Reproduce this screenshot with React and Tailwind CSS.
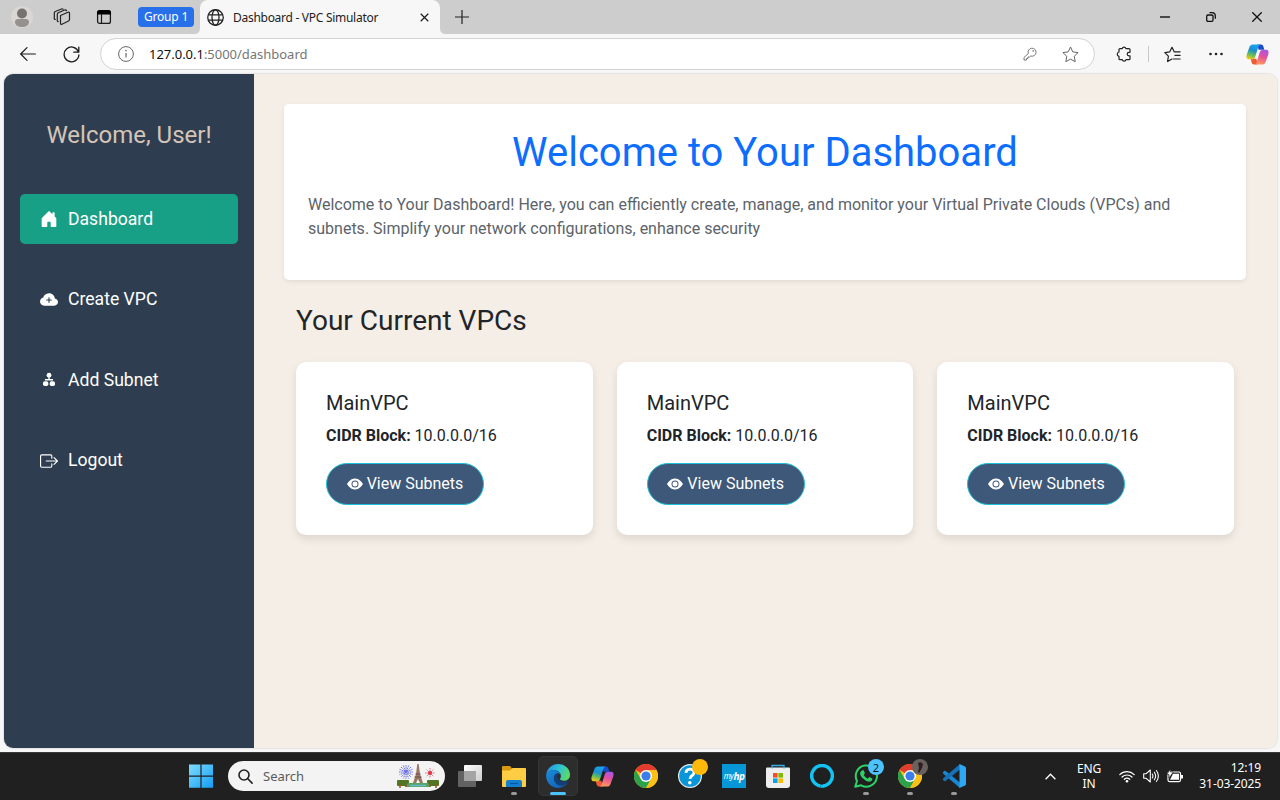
import React from "react";
import { BsHouseDoorFill, BsCloudPlusFill, BsBoxArrowRight, BsEyeFill } from "react-icons/bs";

const ui = "font-['Noto_Sans','Open_Sans',sans-serif]";

function Copilot({ id, className }) {
  return (
    <svg className={className} viewBox="0 0 24 24">
      <defs>
        <linearGradient id={id + "a"} x1="0.6" y1="0" x2="0.3" y2="1">
          <stop offset="0" stopColor="#1aa6ee" />
          <stop offset="0.4" stopColor="#1c8fd4" />
          <stop offset="0.7" stopColor="#63bc5a" />
          <stop offset="1" stopColor="#f3cb1c" />
        </linearGradient>
        <linearGradient id={id + "b"} x1="0.7" y1="0" x2="0.4" y2="1">
          <stop offset="0" stopColor="#a557e8" />
          <stop offset="0.45" stopColor="#e4509c" />
          <stop offset="1" stopColor="#ff9a5c" />
        </linearGradient>
      </defs>
      <path d="M12 1.500h3.700c1.300 0 2 .9 2.400 2.100l1 3.400h-6z" fill="#1b4bc8" />
      <path d="M12 22.500H8.300c-1.300 0-2-.9-2.400-2.100l-1-3.900h6z" fill="#ef5a38" />
      <path d="M7.200 1.500h8c-1.400.3-2 1.400-2.500 3L9.700 14c-.6 2-1.500 3-3.300 3H3.300C.6 17 0 14.800.7 12.300L3.500 4.500c.7-2 1.900-3 3.700-3z" fill={`url(#${id}a)`} />
      <path d="M16.800 22.500h-8c1.400-.3 2-1.400 2.500-3l3-9.500c.6-2 1.500-3 3.300-3h3.100c2.700 0 3.300 2.200 2.600 4.700l-2.800 7.800c-.7 2-1.900 3-3.700 3z" fill={`url(#${id}b)`} />
    </svg>
  );
}

function Chrome() {
  return (
    <svg className="size-6" viewBox="0 0 24 24">
      <circle cx="12" cy="12" r="12" fill="#fbc116" />
      <path d="M12 12 1.600 6A12 12 0 0 1 22.400 6H12z" fill="#e33b2e" />
      <path d="M1.600 6A12 12 0 0 0 12 24l5.200-9L12 12 6.800 15z" fill="#2da24c" />
      <path d="M22.400 6A12 12 0 0 1 12 24l5.200-9A6 6 0 0 0 17 8.600L12 6z" fill="#fbc116" />
      <circle cx="12" cy="12" r="6" fill="#fff" />
      <circle cx="12" cy="12" r="4.600" fill="#3b7ded" />
    </svg>
  );
}

function Edge() {
  return (
    <svg className="size-6" viewBox="0 0 24 24">
      <defs>
        <linearGradient id="edgeTop" x1="0" y1="0.3" x2="1" y2="0.6">
          <stop offset="0" stopColor="#2594e2" />
          <stop offset="0.5" stopColor="#2fc2d4" />
          <stop offset="1" stopColor="#5fdc5c" />
        </linearGradient>
        <linearGradient id="edgeLow" x1="0" y1="0" x2="1" y2="1">
          <stop offset="0" stopColor="#1b8ddb" />
          <stop offset="1" stopColor="#1057b0" />
        </linearGradient>
      </defs>
      <path d="M.2 10.500C1.200 4.500 6 0 12 0c7 0 12 5 12 10.700 0 4-3 6-6.200 6-2.600 0-4-.8-4-1.600 0-.5 1.100-1 1.100-2.900C14.900 8.500 11.600 6 8 6c-3.800 0-6.600 2-7.800 4.500z" fill="url(#edgeTop)" />
      <path d="M.2 10.500C1.500 7.500 4.700 6 8 6c3 0 5.700 1.700 6.600 4-3-1.600-6.600 0-6.600 4.300 0 4.600 4 8 9 7 2-.5 3.500-1.500 4.800-2.500C19.700 22 16 24 12 24 5.400 24-.5 18.500.2 10.500z" fill="url(#edgeLow)" />
      <path d="M8 14.300C8 11 10 9 12.500 9.400c-1.700 1.600-2 4.600.3 6.600 2.600 2.200 6.200 2 9.400.2.600-.3.800.2.500.8-1.300 2.600-4 4.500-7 4.500C11.300 21.500 8 18.300 8 14.300z" fill="#123f78" />
    </svg>
  );
}

function TabStrip() {
  return (
    <header className="flex h-[34px] items-stretch bg-[#cdcdcd]">
      <div className="flex w-[194px] items-center">
        <svg className="ml-[11px] size-[22px]" viewBox="0 0 22 22">
          <circle cx="11" cy="11" r="11" fill="#d9d6d3" />
          <circle cx="11" cy="7.500" r="5" fill="#77726f" />
          <path d="M4 16c0-2 1.500-3 3-3h8c1.500 0 3 1 3 3 0 3-3 5-7 5s-7-2-7-5z" fill="#96918d" />
        </svg>
        <svg className="ml-5 size-[18px]" viewBox="0 0 18 18" fill="none" stroke="#222" strokeWidth="1.200" strokeLinejoin="round" strokeLinecap="round">
          <path d="M7.500 7.500 15 4.300q1.500-.5 1.500 1v6.200q0 1-1 1.500L9 16.200q-1.500.5-1.500-1z" />
          <path d="M5.300 13.500q-1 .2-1-1V6.300q0-1 1-1.500L11.500 2q1.500-.5 2 .8" />
          <path d="M2.300 11.500q-1 0-1-1V5q0-1 1-1.500L8.500 1q1-.4 1.600.2" />
        </svg>
        <svg className="ml-[25px] size-4" viewBox="0 0 16 16" fill="none">
          <rect x="1.600" y="1.800" width="12.800" height="12.600" rx="2" stroke="#1b1b1b" strokeWidth="1.300" />
          <path d="M1 5.500V3.500a2.500 2.500 0 0 1 2.500-2.500h9A2.500 2.500 0 0 1 15 3.500v2z" fill="#000" />
          <path d="M5.500 5v9.500" stroke="#1b1b1b" strokeWidth="1.200" />
        </svg>
        <div className={`${ui} ml-[26px] flex h-5 w-14 items-center justify-center rounded-[4px] bg-[#2870ea] text-[12px] tracking-[-0.2px] whitespace-nowrap text-white`}>Group 1</div>
      </div>
      <svg className="size-[6px] self-end" viewBox="0 0 6 6"><path d="M6 0v6H0q6 0 6-6z" fill="#f7f7f7" /></svg>
      <div className="flex w-60 items-center rounded-t-[8px] bg-[#f7f7f7]">
        <svg className="ml-[7px] size-[17px]" viewBox="0 0 16 16" fill="none" stroke="#222" strokeWidth="1.200">
          <circle cx="8" cy="8" r="7.300" />
          <ellipse cx="8" cy="8" rx="3.300" ry="7.300" />
          <path d="M1.200 5.500h13.600M1.200 10.500h13.600" />
        </svg>
        <span className={`${ui} ml-[9px] w-[145px] pt-px text-[12px] tracking-[-0.28px] whitespace-nowrap text-[#222]`}>Dashboard - VPC Simulator</span>
        <svg className="ml-[42px] size-[9px]" viewBox="0 0 10 10" stroke="#1b1b1b" strokeWidth="1.300">
          <path d="m.8.8 8.400 8.400M9.200.8.800 9.200" />
        </svg>
      </div>
      <svg className="size-[6px] self-end" viewBox="0 0 6 6"><path d="M0 0v6h6Q0 6 0 0z" fill="#f7f7f7" /></svg>
      <div className="flex flex-1 items-center">
        <svg className="ml-[9px] size-[14px]" viewBox="0 0 14 14" stroke="#222" strokeWidth="1.200">
          <path d="M7 0v14M0 7h14" />
        </svg>
        <svg className="ml-auto h-[10px] w-[10px]" viewBox="0 0 10 10" stroke="#111" strokeWidth="1.400">
          <path d="M0 5h10" />
        </svg>
        <svg className="ml-9 size-[10px]" viewBox="0 0 10 10" fill="none" stroke="#111" strokeWidth="1.300">
          <rect x=".7" y="3" width="6.300" height="6.300" rx="1.200" />
          <path d="M3.500.7H6a3.300 3.300 0 0 1 3.300 3.300v2.800" />
        </svg>
        <svg className="mr-[18px] ml-9 size-[10px]" viewBox="0 0 10 10" stroke="#111" strokeWidth="1.300">
          <path d="m.3.300 9.400 9.400M9.700.3.300 9.700" />
        </svg>
      </div>
    </header>
  );
}

function Toolbar() {
  return (
    <div className="flex h-10 items-center bg-[#f7f7f7]">
      <svg className="ml-5 h-[14px] w-4" viewBox="0 0 16 14" fill="none" stroke="#1b1b1b" strokeWidth="1.200" strokeLinecap="round" strokeLinejoin="round">
        <path d="M15.400 7H.7M7 .7.700 7 7 13.300" />
      </svg>
      <svg className="ml-[27px] size-[17px]" viewBox="0 0 17 17" fill="none" stroke="#1b1b1b" strokeWidth="1.300" strokeLinecap="round" strokeLinejoin="round">
        <path d="M15.600 6.200A7.400 7.400 0 1 0 15.900 9M15.800 1.200v5h-5" />
      </svg>
      <div className="ml-5 flex h-8 w-[995px] items-center rounded-full border border-[#d3d3d3] bg-white">
        <svg className="ml-[17px] size-4" viewBox="0 0 16 16" fill="none" stroke="#666" strokeWidth="1">
          <circle cx="8" cy="8" r="7.400" />
          <path d="M8 7v4.600" strokeWidth="1.200" />
          <circle cx="8" cy="4.600" r=".8" fill="#666" stroke="none" />
        </svg>
        <span className={`${ui} ml-[15px] pt-0.5 text-[13px] tracking-[-0.02px] whitespace-nowrap text-[#767676]`}><span className="text-[#111]">127.0.0.1</span>:5000/dashboard</span>
        <svg className="ml-auto size-[14px]" viewBox="0 0 14 14" fill="none" stroke="#777" strokeWidth="1" strokeLinejoin="round">
          <path d="M5.300 6.500A4 4 0 1 1 7.800 9L6.500 10H5v1.500H3.500V13H1v-2.500z" />
          <circle cx="10.200" cy="3.900" r=".8" fill="#777" stroke="none" />
        </svg>
        <svg className="mr-[15px] ml-[25px] size-[17px]" viewBox="0 0 17 17" fill="none" stroke="#666" strokeWidth="1" strokeLinejoin="round">
          <path d="m8.500 1 2.300 4.900 5.300.7-3.900 3.700 1 5.400-4.700-2.600-4.700 2.600 1-5.400L.9 6.600l5.300-.7z" />
        </svg>
      </div>
      <svg className="ml-[21px] size-4" viewBox="0 0 16 16" fill="none" stroke="#222" strokeWidth="1.200" strokeLinejoin="round" strokeLinecap="round">
        <path d="M4 2.600h2.200a1.900 1.900 0 0 1 3.700 0H13q1 0 1 1v2.700h-1a1.800 1.800 0 0 0 0 3.600h1v2.800q0 1-1 1h-3a1.900 1.900 0 0 1-3.700 0H4q-1 0-1-1v-2.400a2.200 2.200 0 0 1 0-4.300V3.600q0-1 1-1z" />
      </svg>
      <div className="ml-4 h-4 w-px bg-[#c8c8c8]" />
      <svg className="ml-[15px] size-[17px]" viewBox="0 0 17 17" fill="none" stroke="#222" strokeWidth="1.200" strokeLinejoin="round" strokeLinecap="round">
        <path d="M10.200 5.800 8 1.300 5.800 5.800.8 6.600l3.600 3.600-.8 5.300L8 13M10.200 5.800h5.900M11 9.400h5.100M9.500 13h6.600" />
      </svg>
      <svg className="ml-[27px] h-1 w-4" viewBox="0 0 16 4" fill="#222">
        <circle cx="2.500" cy="2" r="1.300" /><circle cx="8" cy="2" r="1.300" /><circle cx="13.500" cy="2" r="1.300" />
      </svg>
      <Copilot id="bar" className="ml-[22px] size-[23px]" />
    </div>
  );
}

function HierarchyIcon() {
  return (
    <svg className="size-[18px]" viewBox="0 0 18 18" fill="#fff">
      <circle cx="9" cy="4.200" r="2.400" />
      <path d="M8.300 6h1.400v3h-1.400zM5 8h8v1.400H5z" />
      <rect x="3" y="10.300" width="5.300" height="4.700" rx="1.800" />
      <rect x="9.700" y="10.300" width="5.300" height="4.700" rx="1.800" />
    </svg>
  );
}

const nav = [
  ["Dashboard", <BsHouseDoorFill className="size-[18px]" />],
  ["Create VPC", <BsCloudPlusFill className="size-[18px]" />],
  ["Add Subnet", <HierarchyIcon />],
  ["Logout", <BsBoxArrowRight className="size-[18px]" />],
];

function Sidebar() {
  return (
    <aside className="w-[250px] shrink-0 bg-[#2e3e50] px-4 pt-[45px]">
      <h2 className="text-center text-[24px] leading-8 whitespace-nowrap text-[#d5c4b7]">Welcome, User!</h2>
      <nav className="mt-[43px] flex flex-col gap-[30.500px]">
        {nav.map(([label, icon], i) => (
          <a key={label} className={`flex h-[50px] items-center gap-[10px] rounded-[5px] pl-5 text-[17.600px] whitespace-nowrap text-white ${i === 0 ? "bg-[#18a086]" : ""}`}>
            {icon}
            <span>{label}</span>
          </a>
        ))}
      </nav>
    </aside>
  );
}

function VpcCard() {
  return (
    <article className="h-[173px] flex-1 rounded-[10px] bg-white px-[30px] pt-[29px] shadow-[0_4px_8px_rgba(0,0,0,0.1)]">
      <h5 className="text-[20px] leading-6 text-[#212529]">MainVPC</h5>
      <p className="mt-[9px] text-[16px] leading-6 text-[#212529]"><strong className="font-bold">CIDR Block:</strong> 10.0.0.0/16</p>
      <button className="mt-[15px] flex h-[42px] w-[158px] items-center justify-center gap-1 rounded-full border border-[#20bfd8] bg-[#3d5878] text-[16px] whitespace-nowrap text-white">
        <BsEyeFill className="size-4" />
        <span>View Subnets</span>
      </button>
    </article>
  );
}

function Main() {
  return (
    <main className="flex-1 bg-[#f5eee6] pt-[30px] pr-[31px] pl-[30px]">
      <section className="h-44 rounded-[5px] bg-white px-6 pt-[25px] shadow-[0_2px_4px_rgba(0,0,0,0.075)]">
        <h1 className="text-center text-[40px] leading-[48px] text-[#0d6efd]">Welcome to Your Dashboard</h1>
        <p className="mt-4 text-[16px] leading-6 whitespace-nowrap text-[#5c636a]">Welcome to Your Dashboard! Here, you can efficiently create, manage, and monitor your Virtual Private Clouds (VPCs) and<br />subnets. Simplify your network configurations, enhance security</p>
      </section>
      <section className="px-3 pt-6">
        <h3 className="text-[28px] leading-[34px] text-[#212529]">Your Current VPCs</h3>
        <div className="mt-6 flex gap-6">
          <VpcCard /><VpcCard /><VpcCard />
        </div>
      </section>
    </main>
  );
}

function TaskbarApp({ children, dot, active }) {
  return (
    <div className={`relative mx-[2px] flex h-10 w-10 items-center justify-center ${active ? "rounded-[5px] border border-[#353535] bg-[#2d2d2d]" : ""}`}>
      {children}
      {dot && <i className="absolute bottom-px h-[3px] w-1.5 rounded-full bg-[#999]" />}
      {active && <i className="absolute bottom-0 h-[3px] w-4 rounded-full bg-[#4cc2ff]" />}
    </div>
  );
}

function Taskbar() {
  return (
    <footer className={`${ui} flex h-12 items-center border-t border-[#3a3a3a] bg-[#202020] pb-px`}>
      <svg className="ml-[189px] size-6" viewBox="0 0 24 24">
        <defs><linearGradient id="win" x1="0" y1="0" x2="1" y2="1"><stop stopColor="#7edcff" /><stop offset="1" stopColor="#139df4" /></linearGradient></defs>
        <path d="M0 .5h11.400v11H0zM12.600.5H24v11H12.600zM0 12.700h11.400v11H0zM12.600 12.700H24v11H12.600z" fill="url(#win)" />
      </svg>
      <div className="ml-[15px] flex h-[30px] w-[217px] items-center rounded-full bg-[#f3f3f3]">
        <svg className="ml-[10px] size-[15px]" viewBox="0 0 15 15" fill="none" stroke="#222" strokeWidth="1.600" strokeLinecap="round">
          <circle cx="6" cy="6" r="5" /><path d="m9.800 9.800 4.300 4.300" />
        </svg>
        <span className="ml-[10px] pt-px text-[13px] tracking-[0px] text-[#5b5b5b]">Search</span>
        <svg className="mr-[6px] ml-auto h-[26px] w-[42px]" viewBox="0 0 42 26">
          <g stroke="#666de6" strokeWidth="1" strokeDasharray="1.500 .7"><path d="M9 2v14M2 9h14M4 4l10 10M14 4 4 14M6.300 2.500l5.400 13M15.500 6.300l-13 5.400M2.500 6.300l13 5.400M11.700 2.500l-5.400 13" /></g>
          <g stroke="#e06a76" strokeWidth=".9" strokeDasharray="1.500 .5"><path d="M33 5v10M28 10h10M29.500 6.500l7 7M36.500 6.500l-7 7" /></g>
          <circle cx="33" cy="10" r="2" fill="#dd3545" />
          <path d="M20.300 1h1.400l1.300 10 3 9h-3l-2-4-2 4h-3l3-9z" fill="#9a7763" />
          <path d="M18.500 11h5M17.500 14h7" stroke="#66504a" />
          <rect x="0" y="17" width="12" height="6" rx="1" fill="#537423" /><rect x="30" y="17" width="12" height="6" rx="1" fill="#537423" />
          <path d="M11 20h20l3 4H8z" fill="#58a35d" /><path d="M13 22.500h16" stroke="#66b8d3" strokeWidth="1.500" />
          <path d="M3 21v4M9 21v3M33 21v3M39 21v4" stroke="#8a5a27" strokeWidth="1.500" />
        </svg>
      </div>
      <div className="ml-[3px] flex">
        <TaskbarApp>
          <svg className="size-6" viewBox="0 0 24 24"><defs><linearGradient id="tv" x1="0" y1="0" x2="1" y2="1"><stop stopColor="#fff" /><stop offset="1" stopColor="#ccc" /></linearGradient></defs><rect x="6" y="1" width="18" height="16" rx="1" fill="url(#tv)" /><rect x="0" y="7" width="18" height="16" rx="1" fill="#626262" /><path d="M6 7h12v10H6z" fill="#a4a4a4" /></svg>
        </TaskbarApp>
        <TaskbarApp dot>
          <svg className="size-6" viewBox="0 0 24 24"><path d="M0 3q0-1 1-1h7l2 2.500V7H0z" fill="#d9980d" /><path d="M0 6.500h8L10.500 4H23q1 0 1 1v17q0 1-1 1H1q-1 0-1-1z" fill="#ffcd44" /><path d="M4 23v-5q0-2 2-2h12q2 0 2 2v5z" fill="#137fd1" /><path d="M8 19.500h8" stroke="#0855a0" strokeWidth="1.200" /></svg>
        </TaskbarApp>
        <TaskbarApp active><Edge /></TaskbarApp>
        <TaskbarApp><Copilot id="task" className="size-[23px]" /></TaskbarApp>
        <TaskbarApp><Chrome /></TaskbarApp>
        <TaskbarApp>
          <svg className="size-6" viewBox="0 0 24 24"><circle cx="12" cy="12" r="11.400" fill="#0996d8" stroke="#eee" strokeWidth="1.200" /><path d="M8 9c0-5 8-5 8-.5 0 3.500-4 2.500-4 6.500" fill="none" stroke="#fff" strokeWidth="2.800" /><circle cx="11.800" cy="18.800" r="1.800" fill="#fff" /></svg>
          <i className="absolute top-[3px] right-[2px] size-4 rounded-full bg-[#ffb90a]" />
        </TaskbarApp>
        <TaskbarApp><span className="flex size-6 items-center justify-center bg-[#0797d7] text-[8px] tracking-[-0.5px] text-white italic">my<b className="text-[10px]">hp</b></span></TaskbarApp>
        <TaskbarApp>
          <svg className="size-6" viewBox="0 0 24 24"><path d="M0 4.500q0-1 1-1h22q1 0 1 1V21q0 3-3 3H3q-3 0-3-3z" fill="#eee" /><path d="M6 4.500V1.500h12v3" fill="none" stroke="#31aeea" strokeWidth="1.300" /><path d="M7 9h4.600v4.600H7z" fill="#f25022" /><path d="M12.400 9H17v4.600h-4.600z" fill="#7fba00" /><path d="M7 14.400h4.600V19H7z" fill="#00a4ef" /><path d="M12.400 14.400H17V19h-4.600z" fill="#ffb900" /></svg>
        </TaskbarApp>
        <TaskbarApp><svg className="size-6" viewBox="0 0 24 24"><path d="M10.500 22A10.300 10.300 0 1 1 13.500 22" fill="none" stroke="#12c4f4" strokeWidth="3.400" /><path d="M10.500 23.700v-3q2 .3 5-1L14 23.700z" fill="#12c4f4" /></svg></TaskbarApp>
        <TaskbarApp dot>
          <svg className="size-6" viewBox="0 0 24 24"><path d="M1.200 22.800 3 17A10.600 10.600 0 1 1 7.200 21.300z" fill="none" stroke="#2bd366" strokeWidth="2" strokeLinejoin="round" /><path d="M8.200 6.300h1.500l1.200 3-1.200 1.700q1.300 2.500 4 3.700l1.600-1.700 3 1.400q.2 2.500-2.500 3.200-3.300.5-7-3.300Q5.500 11 6.300 8.200z" fill="#2bd366" /></svg>
          <span className="absolute top-[3px] right-[2px] flex size-4 items-center justify-center rounded-full bg-[#4cc2ff] text-[11px] leading-none text-[#111]">2</span>
        </TaskbarApp>
        <TaskbarApp dot>
          <Chrome />
          <svg className="absolute top-[3px] right-[2px] size-4" viewBox="0 0 16 16"><circle cx="8" cy="8" r="8" fill="#68615d" /><path d="M6 4q3-2 5 1l-1 4-3 5-1-1 1-4z" fill="#2e1e24" /></svg>
        </TaskbarApp>
        <TaskbarApp dot>
          <svg className="size-6" viewBox="0 0 24 24"><path d="m1 8 2-1.500 15 12V24L1.500 10q-1-1-.5-2z" fill="#1788d1" /><path d="M18 0v5.500L3 17.500 1 16q-.5-1 .5-2z" fill="#1572b8" /><path d="m17.500 0 5.500 2.500q1 .5 1 1.500v16q0 1-1 1.500L17.500 24z" fill="#2fa7f3" /></svg>
        </TaskbarApp>
      </div>
      <div className="ml-auto flex items-center text-white">
        <svg className="h-[7px] w-[11px]" viewBox="0 0 11 7" fill="none" stroke="#fff" strokeWidth="1.300"><path d="m.6 6.200 4.900-5 4.900 5" /></svg>
        <div className="ml-[17px] w-8 text-center text-[12px] leading-[15px] tracking-[-0.1px]">ENG<br />IN</div>
        <svg className="ml-[14px] h-[13px] w-4" viewBox="0 0 16 13" fill="none" stroke="#fff" strokeWidth="1.200" strokeLinecap="round"><path d="M.8 4.600a10.300 10.300 0 0 1 14.400 0M3 7a7.200 7.200 0 0 1 10 0M5.300 9.300a4 4 0 0 1 5.400 0" /><circle cx="8" cy="11.300" r="1.300" fill="#fff" stroke="none" /></svg>
        <svg className="ml-2 h-[14px] w-4" viewBox="0 0 16 14" fill="none" stroke="#fff" strokeWidth="1.100" strokeLinejoin="round" strokeLinecap="round"><path d="M.7 4.700h2.500L7.300 1v12L3.200 9.300H.7zM9.300 5q1.300 2 0 4M11.300 3.200q2.700 3.800 0 7.600M13.400 1.500q4 5.500 0 11" /></svg>
        <svg className="ml-2 h-[14px] w-4" viewBox="0 0 16 14"><rect x="1" y="3" width="12.500" height="9.600" rx="1.500" fill="none" stroke="#fff" strokeWidth="1.200" /><path d="M14 6h2v3.500h-2zM6 4.800h6v6H3z" fill="#fff" /><path d="M3.500 0v3h2.800L2 9V5.500H0z" fill="#fff" stroke="#202020" strokeWidth=".6" /></svg>
        <div className="mr-[19px] ml-[16px] w-[62px] text-right text-[12px] leading-4 tracking-[-0.1px] whitespace-nowrap">12:19<br />31-03-2025</div>
      </div>
    </footer>
  );
}

export default function App() {
  return (
    <div className="flex h-[800px] w-[1280px] flex-col overflow-hidden bg-[#f7f7f7] font-[Roboto,sans-serif]">
      <TabStrip />
      <Toolbar />
      <div className="mr-[3px] mb-1 ml-1 flex h-[674px] overflow-hidden rounded-[9px] shadow-[0_0_2px_rgba(0,0,0,0.25)]">
        <Sidebar />
        <Main />
      </div>
      <Taskbar />
    </div>
  );
}
